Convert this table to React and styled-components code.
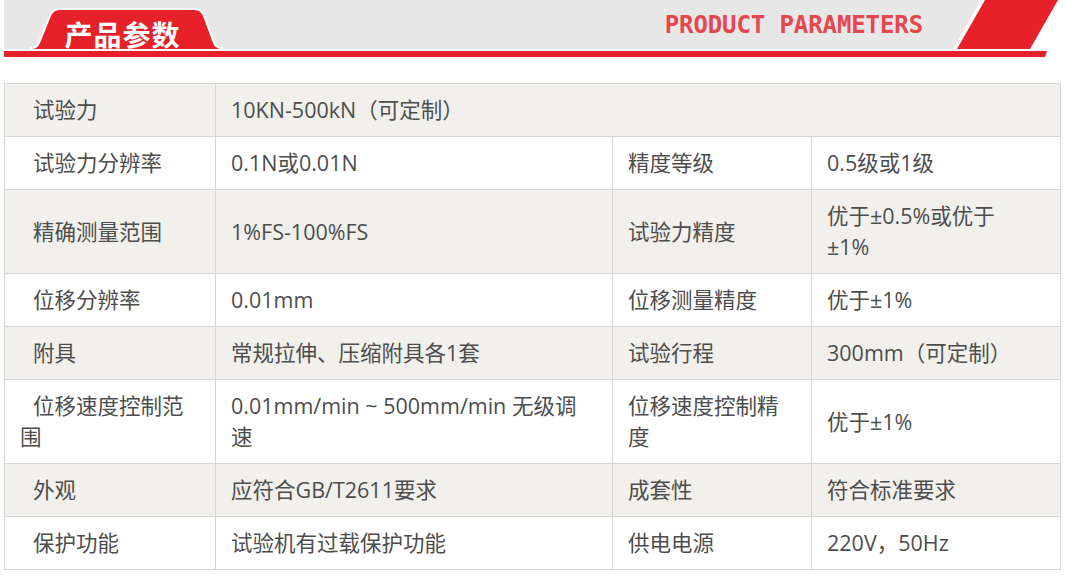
import React from "react";
import styled, { createGlobalStyle } from "styled-components";

const RED = "#e62129";
const GRAY = "#e7e7e7";

// "\n" marks where the reference breaks a long value onto a second line
const rows = [
  { cells: ["试验力", "10KN-500kN（可定制）"], shaded: true },
  { cells: ["试验力分辨率", "0.1N或0.01N", "精度等级", "0.5级或1级"] },
  {
    cells: ["精确测量范围", "1%FS-100%FS", "试验力精度", "优于±0.5%或优于\n±1%"],
    shaded: true,
  },
  { cells: ["位移分辨率", "0.01mm", "位移测量精度", "优于±1%"] },
  {
    cells: ["附具", "常规拉伸、压缩附具各1套", "试验行程", "300mm（可定制）"],
    shaded: true,
  },
  {
    cells: [
      "位移速度控制范围",
      "0.01mm/min ~ 500mm/min 无级调\n速",
      "位移速度控制精度",
      "优于±1%",
    ],
  },
  {
    cells: ["外观", "应符合GB/T2611要求", "成套性", "符合标准要求"],
    shaded: true,
  },
  { cells: ["保护功能", "试验机有过载保护功能", "供电电源", "220V，50Hz"] },
];

const TAB_PATH =
  "M0,41 C6,41 8,39 10,35 L21,8 C23,4 25,2 31,2 L163,2 C169,2 171,4 173,8 L183,35 C185,39 187,41 193,41";

const App = () => {
  return (
    <Page>
      <GlobalStyle />
      <Header>
        <Banner>
          <GrayBand>
            <Tab>
              <TabShape viewBox="0 0 193 43" width="193" height="43">
                <path d={TAB_PATH} fill="none" stroke="#fff" strokeWidth="4" />
                <path d={TAB_PATH + " Z"} fill={RED} />
              </TabShape>
              <TabTitle>产品参数</TabTitle>
            </Tab>
            <EnTitle>PRODUCT PARAMETERS</EnTitle>
          </GrayBand>
          <svg width="130" height="49" viewBox="0 0 130 49">
            <polygon points="0,0 51,0 23,49 0,49" fill={GRAY} />
            <polygon points="55,0 128,0 100,49 27,49" fill={RED} />
          </svg>
        </Banner>
        <RedLine />
      </Header>

      <Table>
        <colgroup>
          <col style={{ width: 211 }} />
          <col style={{ width: 397 }} />
          <col style={{ width: 199 }} />
          <col style={{ width: 249 }} />
        </colgroup>
        <tbody>
          {rows.map((row, rowIndex) => (
            <Row key={rowIndex} $shaded={row.shaded}>
              {row.cells.map((text, cellIndex) => (
                <Cell
                  key={cellIndex}
                  $indent={cellIndex === 0}
                  colSpan={row.cells.length === 2 && cellIndex === 1 ? 3 : 1}
                >
                  {text}
                </Cell>
              ))}
            </Row>
          ))}
        </tbody>
      </Table>
    </Page>
  );
};

const GlobalStyle = createGlobalStyle`
  body {
    margin: 0;
    background: #ffffff;
  }
`;

const Page = styled.div`
  width: 1066px;
  padding-left: 4px;
  box-sizing: border-box;
  font-family: "Open Sans", "Noto Sans CJK SC", sans-serif;
`;

const Header = styled.div`
  width: 1056px;
`;

const Banner = styled.div`
  display: flex;
  height: 49px;
`;

const GrayBand = styled.div`
  flex: 1;
  display: flex;
  align-items: flex-end;
  background: ${GRAY};
`;

const Tab = styled.div`
  position: relative;
  width: 193px;
  height: 41px;
  margin-left: 26px;
  margin-bottom: -2px;
  display: flex;
  justify-content: center;
  align-items: center;
`;

const TabShape = styled.svg`
  position: absolute;
  left: 0;
  top: -2px;
`;

const TabTitle = styled.span`
  position: relative;
  color: #ffffff;
  font-family: "Noto Sans CJK SC", sans-serif;
  font-weight: 700;
  font-size: 28px;
  line-height: 1;
  padding-top: 6px;
  padding-right: 8px;
  letter-spacing: 1px;
`;

const EnTitle = styled.div`
  align-self: center;
  margin-left: auto;
  margin-right: 7px;
  color: #e5474f;
  font-family: "DejaVu Sans Mono", monospace;
  font-weight: 700;
  font-size: 24px;
  line-height: 1;
  letter-spacing: -0.1px;
`;

const RedLine = styled.div`
  height: 6px;
  width: 1043px;
  margin-top: 2px;
  background: ${RED};
  clip-path: polygon(0 0, 100% 0, calc(100% - 2px) 100%, 0 100%);
`;

const Table = styled.table`
  margin-top: 26px;
  width: 1056px;
  border-collapse: collapse;
  table-layout: fixed;
  color: #4d4d4d;
  font-size: 21.5px;
`;

const Row = styled.tr`
  background: ${(p) => (p.$shaded ? "#f1f0ec" : "#ffffff")};
`;

const Cell = styled.td`
  border: 1px solid #d6d6d6;
  padding: 10px 16px 11px 15px;
  line-height: 31px;
  vertical-align: middle;
  white-space: pre-line;
  text-indent: ${(p) => (p.$indent ? "13px" : "0")};
`;

export default App;
